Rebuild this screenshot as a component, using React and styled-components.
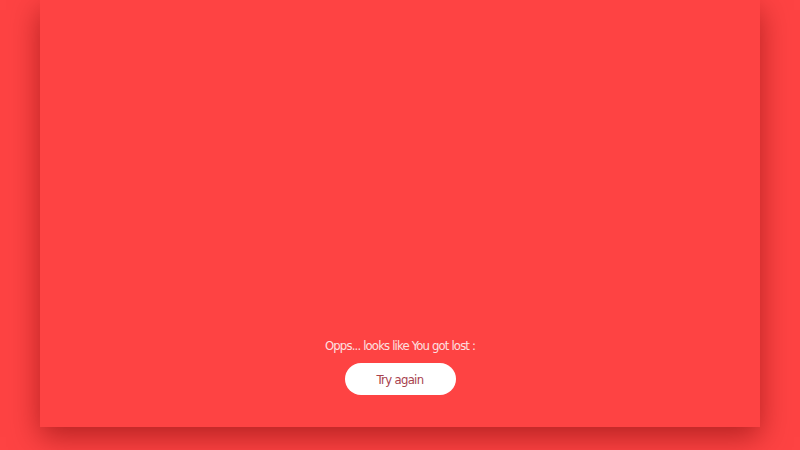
import React from "react";
import styled, { createGlobalStyle } from "styled-components";

const GlobalStyle = createGlobalStyle`
  html, body {
    margin: 0;
    padding: 0;
    background: #fe4343;
    overflow: hidden;
  }
`;

const Page = styled.div`
  width: 800px;
  height: 450px;
  background: #fe4343;
  padding: 0 40px;
  box-sizing: border-box;
`;

const Card = styled.div`
  height: 427px;
  background: #fe4343;
  box-shadow: 0 10px 28px rgba(110, 0, 0, 0.5);
  display: flex;
  flex-direction: column;
  align-items: center;
  justify-content: flex-end;
  padding-bottom: 32px;
  box-sizing: border-box;
`;

const Message = styled.p`
  margin: 0 0 10px;
  font-family: "DejaVu Sans Condensed", "DejaVu Sans", sans-serif;
  font-stretch: condensed;
  font-size: 13px;
  letter-spacing: -0.85px;
  color: #fde0e0;
`;

const Button = styled.button`
  width: 111px;
  height: 32px;
  border: none;
  border-radius: 16px;
  background: #fff;
  color: #a8424e;
  font-family: "DejaVu Sans Condensed", "DejaVu Sans", sans-serif;
  font-stretch: condensed;
  font-size: 13px;
  letter-spacing: -0.7px;
  cursor: pointer;
`;

export default function App() {
  return (
    <>
      <GlobalStyle />
      <Page>
        <Card>
          <Message>Opps... looks like You got lost :</Message>
          <Button>Try again</Button>
        </Card>
      </Page>
    </>
  );
}
